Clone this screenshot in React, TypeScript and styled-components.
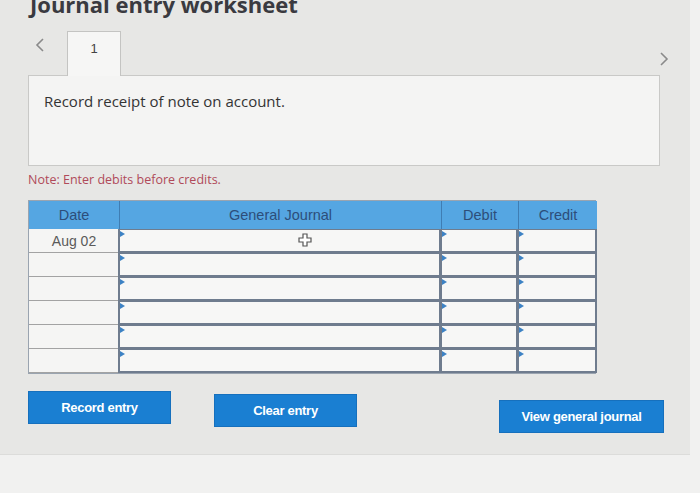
import React from "react";
import styled, { createGlobalStyle } from "styled-components";

const Global = createGlobalStyle`
  html, body { margin: 0; padding: 0; }
  body { background: #f1f1f0; font-family: "Liberation Sans", Arial, sans-serif; overflow: hidden; }
`;

const Page = styled.div`
  width: 700px;
  height: 493px;
  background: #f1f1f0;
`;

const Panel = styled.div`
  width: 690px;
  height: 455px;
  background: #e7e7e5;
  border-bottom: 1px solid #dcdcda;
  padding-left: 28px;
  box-sizing: border-box;
  display: flex;
  flex-direction: column;
`;

const Title = styled.h1`
  margin: -9px 0 0 2px;
  font-family: "Open Sans", sans-serif;
  font-weight: 700;
  font-size: 22px;
  line-height: 26px;
  color: #3a3a40;
  height: 23px;
`;

const TabRow = styled.div`
  display: flex;
  align-items: flex-end;
  height: 45px;
  margin-top: 16px;
  width: 641px;
`;

const Chevron = styled.svg<{ $right?: boolean }>`
  flex: none;
  align-self: ${(p) => (p.$right ? "flex-end" : "flex-start")};
  margin: ${(p) => (p.$right ? "0 0 9px auto" : "8px 0 0 7px")};
`;

const Tab = styled.div`
  width: 54px;
  height: 45px;
  margin-left: 23px;
  box-sizing: border-box;
  background: #f6f6f5;
  border: 1px solid #c4c4c2;
  border-bottom: none;
  margin-bottom: -1px;
  position: relative;
  z-index: 1;
  display: flex;
  justify-content: center;
  padding-top: 9px;
  font-size: 13px;
  color: #444;
`;

const ContentBox = styled.div`
  width: 632px;
  height: 91px;
  box-sizing: border-box;
  background: #f4f4f3;
  border: 1px solid #c9c9c7;
  padding: 15px 15px;
  font-family: "Open Sans", sans-serif;
  font-size: 15px;
  line-height: 20px;
  color: #333;
`;

const Note = styled.div`
  margin-top: 4px;
  font-family: "Open Sans", sans-serif;
  font-size: 12.5px;
  color: #b04a5a;
  height: 30px;
  line-height: 20px;
`;

const Table = styled.div`
  width: 568px;
  display: grid;
  grid-template-columns: 90px 322px 77px 79px;
  border: 1px solid #9aa4b0;
  box-sizing: border-box;
`;

const Head = styled.div`
  background: #55a6e2;
  height: 28px;
  display: flex;
  align-items: center;
  justify-content: center;
  color: #2d4e7a;
  font-size: 14.5px;
  border-left: 1px solid #3f7db3;
  &:first-child { border-left: none; }
`;

const DateCell = styled.div`
  height: 24px;
  box-sizing: border-box;
  background: #f5f5f4;
  border-bottom: 1px solid #a3a3a3;
  display: flex;
  align-items: center;
  justify-content: center;
  color: #5a5a5a;
  font-size: 14px;
`;

const InputCell = styled.div`
  height: 24px;
  box-sizing: border-box;
  background: #f7f7f6;
  border: 2px solid #6f7c8e;
  border-top-width: 1px;
  margin-left: -1px;
  position: relative;
  &::before {
    content: "";
    position: absolute;
    left: 0;
    top: 1px;
    border-left: 5px solid #3d82c4;
    border-top: 3px solid transparent;
    border-bottom: 3px solid transparent;
  }
`;

const Cursor = styled.svg`
  position: absolute;
  left: 178px;
  top: 3px;
`;

const ButtonRow = styled.div`
  display: flex;
  align-items: flex-start;
  margin-top: 17px;
  width: 636px;
`;

const Button = styled.button<{ $w: number; $drop?: number; $gap?: number }>`
  width: ${(p) => p.$w}px;
  height: 33px;
  margin-top: ${(p) => p.$drop ?? 0}px;
  margin-left: ${(p) => p.$gap ?? 0}px;
  background: #1a7fd2;
  border: 1px solid #1670bd;
  color: #fff;
  font-family: "Liberation Sans", Arial, sans-serif;
  font-weight: 700;
  font-size: 13px;
  letter-spacing: -0.3px;
  padding: 0;
`;

const rows = ["Aug 02", "", "", "", "", ""];

export default function App() {
  return (
    <Page>
      <Global />
      <Panel>
        <Title>Journal entry worksheet</Title>
        <TabRow>
          <Chevron width="9" height="14" viewBox="0 0 9 14">
            <polyline points="8,1 2,7 8,13" fill="none" stroke="#8a8a8a" strokeWidth="1.6" />
          </Chevron>
          <Tab>1</Tab>
          <Chevron $right width="9" height="14" viewBox="0 0 9 14">
            <polyline points="1,1 7,7 1,13" fill="none" stroke="#8a8a8a" strokeWidth="1.6" />
          </Chevron>
        </TabRow>
        <ContentBox>Record receipt of note on account.</ContentBox>
        <Note>Note: Enter debits before credits.</Note>
        <Table>
          <Head>Date</Head>
          <Head>General Journal</Head>
          <Head>Debit</Head>
          <Head>Credit</Head>
          {rows.map((d, i) => (
            <React.Fragment key={i}>
              <DateCell>{d}</DateCell>
              <InputCell>
                {i === 0 && (
                  <Cursor width="14" height="14" viewBox="0 0 14 14">
                    <path
                      d="M5 1h4v4h4v4H9v4H5V9H1V5h4z"
                      fill="#fff"
                      stroke="#555"
                      strokeWidth="1.2"
                    />
                  </Cursor>
                )}
              </InputCell>
              <InputCell />
              <InputCell />
            </React.Fragment>
          ))}
        </Table>
        <ButtonRow>
          <Button $w={143}>Record entry</Button>
          <Button $w={143} $drop={3} $gap={43}>Clear entry</Button>
          <Button $w={165} $drop={9} $gap={142}>View general journal</Button>
        </ButtonRow>
      </Panel>
    </Page>
  );
}
